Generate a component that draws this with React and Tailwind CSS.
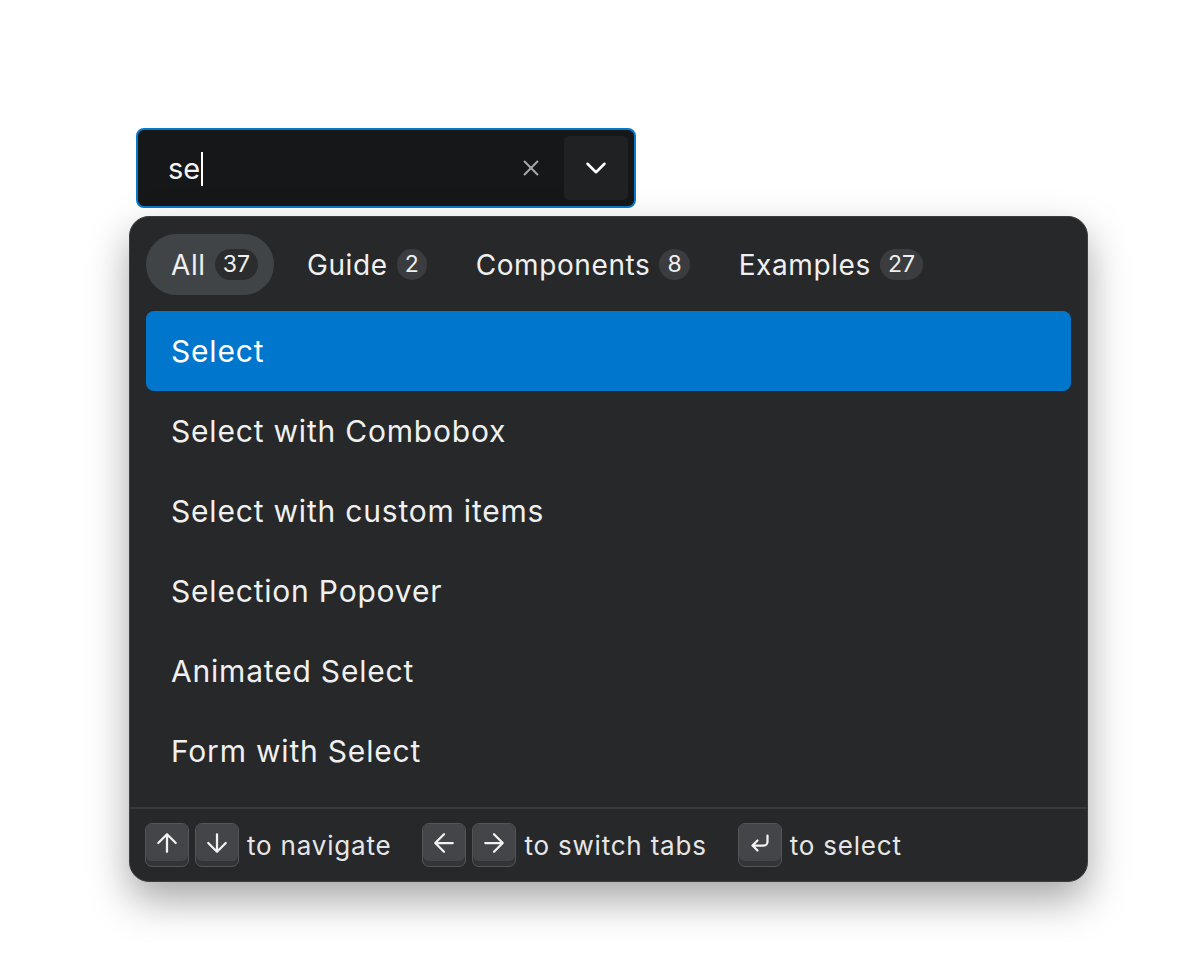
import React from 'react';

const tabs = [
  { label: 'All', count: 37, active: true },
  { label: 'Guide', count: 2 },
  { label: 'Components', count: 8 },
  { label: 'Examples', count: 27 },
];

const items = [
  'Select',
  'Select with Combobox',
  'Select with custom items',
  'Selection Popover',
  'Animated Select',
  'Form with Select',
];

const Key = ({ children }) => (
  <span className="flex h-[44px] w-[44px] items-start justify-center rounded-[7px] border border-[#535557] bg-[#333436] pb-[5px]">
    <span className="flex h-[37px] w-full items-center justify-center rounded-[6px] bg-[#444548] text-[#f2f2f2]">
      {children}
    </span>
  </span>
);

const Arrow = ({ d }) => (
  <svg width="30" height="30" viewBox="0 0 24 24" fill="none" stroke="currentColor" strokeWidth="1.8" strokeLinecap="round" strokeLinejoin="round">
    <path d={d} />
  </svg>
);

export default function App() {
  return (
    <div className="min-h-screen bg-white font-['Inter',sans-serif] text-[#f0f0f0] tracking-[0.8px]">
      <div className="pl-[129px] pt-[128px]">
        {/* Search input */}
        <div className="ml-[7px] flex h-[80px] w-[500px] items-center rounded-[8px] border-2 border-[#0a78c8] bg-[#161718] pl-[30px] pr-[6px]">
          <span className="flex-1 text-[29px] tracking-normal text-[#f5f5f5]">
            se<span className="ml-[1px] inline-block h-[34px] w-[1.5px] translate-y-[7px] bg-white" />
          </span>
          <span className="mr-[22px] text-[#a7a8aa]">
            <svg width="22" height="22" viewBox="0 0 24 24" fill="none" stroke="currentColor" strokeWidth="2.2" strokeLinecap="round">
              <path d="M5 5l14 14M19 5L5 19" />
            </svg>
          </span>
          <span className="flex h-[64px] w-[64px] items-center justify-center rounded-[6px] bg-[#202122] text-white">
            <svg width="34" height="34" viewBox="0 0 24 24" fill="none" stroke="currentColor" strokeWidth="1.8" strokeLinecap="round" strokeLinejoin="round">
              <path d="M6 9l6 6 6-6" />
            </svg>
          </span>
        </div>

        {/* Popover */}
        <div className="mt-[8px] w-[959px] overflow-hidden rounded-[20px] border border-[#3d3e41] bg-[#27282a] shadow-[0_18px_40px_rgba(0,0,0,0.35)]">
          <div className="flex items-center gap-[8px] px-[16px] pt-[17px] text-[28px] tracking-[0.6px]">
            {tabs.map((t) => (
              <div
                key={t.label}
                className={`flex h-[61px] items-center rounded-full pl-[25px] pr-[16px] ${t.active ? 'bg-[#414447]' : ''}`}
              >
                <span>{t.label}</span>
                <span className={`ml-[9px] flex h-[31px] min-w-[30px] items-center justify-center rounded-full px-[8px] text-[23px] tracking-normal ${t.active ? 'bg-[#2b2c2e]' : 'bg-[#3b3c3f]'}`}>
                  {t.count}
                </span>
              </div>
            ))}
          </div>

          <div className="px-[16px] pb-[16px] pt-[16px] text-[30px]">
            {items.map((item, i) => (
              <div
                key={item}
                className={`flex h-[80px] items-center rounded-[8px] pl-[25px] ${i === 0 ? 'bg-[#0077cc] text-white' : ''}`}
              >
                {item}
              </div>
            ))}
          </div>

          <div className="flex h-[74px] items-center border-t-2 border-[#38393c] px-[15px] text-[26px] text-[#e6e6e6]">
            <div className="flex items-center gap-[6px]">
              <Key><Arrow d="M12 19V5M5 12l7-7 7 7" /></Key>
              <Key><Arrow d="M12 5v14M19 12l-7 7-7-7" /></Key>
              <span className="ml-[2px]">to navigate</span>
            </div>
            <div className="ml-[31px] flex items-center gap-[6px]">
              <Key><Arrow d="M19 12H5M12 19l-7-7 7-7" /></Key>
              <Key><Arrow d="M5 12h14M12 5l7 7-7 7" /></Key>
              <span className="ml-[2px]">to switch tabs</span>
            </div>
            <div className="ml-[31px] flex items-center gap-[6px]">
              <Key><Arrow d="M18 6v5a3 3 0 0 1-3 3H6M10 10l-4 4 4 4" /></Key>
              <span className="ml-[2px]">to select</span>
            </div>
          </div>
        </div>
      </div>
    </div>
  );
}
